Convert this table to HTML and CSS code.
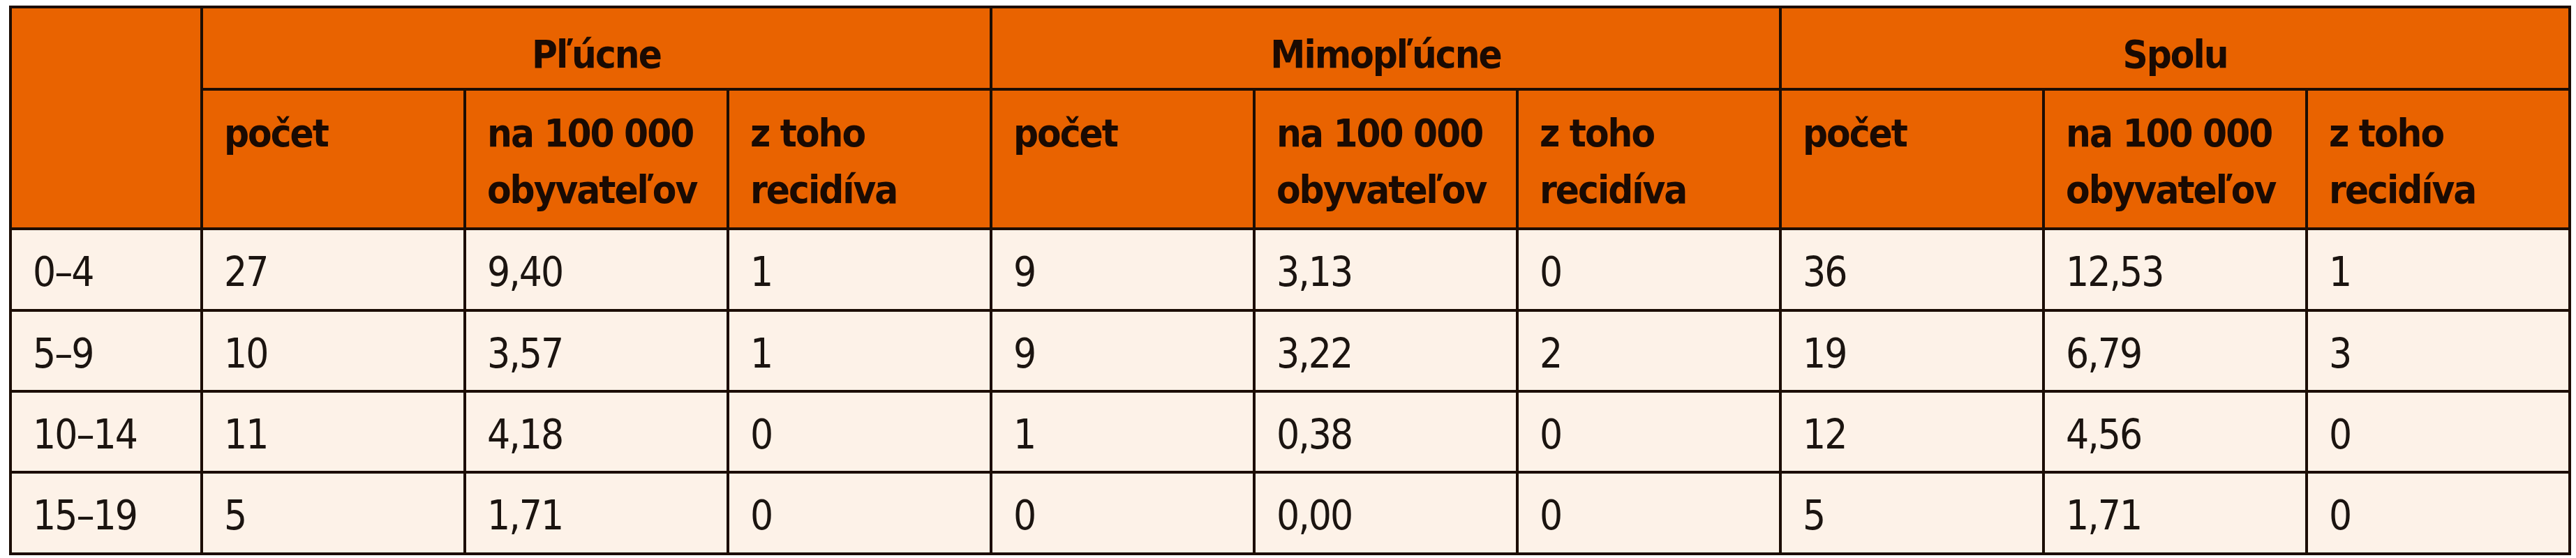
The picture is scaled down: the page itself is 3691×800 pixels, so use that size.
FILE: index.html
```html
<!DOCTYPE html>
<html lang="sk">
<head>
<meta charset="utf-8">
<title>Tabuľka</title>
<link rel="stylesheet" href="styles.css">
</head>
<body>
<table class="data">
  <colgroup>
    <col class="c-age">
    <col class="c-num"><col class="c-num"><col class="c-num">
    <col class="c-num"><col class="c-num"><col class="c-num">
    <col class="c-num"><col class="c-num"><col class="c-num">
  </colgroup>
  <thead>
    <tr class="h1">
      <th rowspan="2" class="corner"></th>
      <th colspan="3" class="group">Pľúcne</th>
      <th colspan="3" class="group">Mimopľúcne</th>
      <th colspan="3" class="group">Spolu</th>
    </tr>
    <tr class="h2">
      <th>počet</th><th>na 100 000<br>obyvateľov</th><th>z toho<br>recidíva</th>
      <th>počet</th><th>na 100 000<br>obyvateľov</th><th>z toho<br>recidíva</th>
      <th>počet</th><th>na 100 000<br>obyvateľov</th><th>z toho<br>recidíva</th>
    </tr>
  </thead>
  <tbody>
    <tr class="r1">
      <td>0–4</td><td>27</td><td>9,40</td><td>1</td><td>9</td><td>3,13</td><td>0</td><td>36</td><td>12,53</td><td>1</td>
    </tr>
    <tr class="r2">
      <td>5–9</td><td>10</td><td>3,57</td><td>1</td><td>9</td><td>3,22</td><td>2</td><td>19</td><td>6,79</td><td>3</td>
    </tr>
    <tr class="r3">
      <td>10–14</td><td>11</td><td>4,18</td><td>0</td><td>1</td><td>0,38</td><td>0</td><td>12</td><td>4,56</td><td>0</td>
    </tr>
    <tr class="r4">
      <td>15–19</td><td>5</td><td>1,71</td><td>0</td><td>0</td><td>0,00</td><td>0</td><td>5</td><td>1,71</td><td>0</td>
    </tr>
  </tbody>
</table>
</body>
</html>
```
FILE: styles.css
```css
html, body {
  margin: 0;
  padding: 0;
  background: #ffffff;
}

body {
  padding: 8px 0 0 13px;
  font-family: "DejaVu Sans Condensed", "DejaVu Sans", sans-serif;
  font-stretch: condensed;
  color: #1b1410;
}

.data {
  border-collapse: collapse;
  table-layout: fixed;
  width: 3669px;
  border: 4px solid #1c0d04;
}

.c-age { width: 274px; }
.c-num { width: 377px; }

.data th,
.data td {
  border: 4px solid #1c0d04;
  padding: 0 0 0 30px;
  text-align: left;
  line-height: 81px;
  white-space: nowrap;
  overflow: hidden;
}

.data th {
  background: #e96300;
  color: #1a0a02;
  font-weight: bold;
  font-size: 56px;
  letter-spacing: -2px;
}

.h1 { height: 118px; }
.h2 { height: 200px; }

.data th.group {
  text-align: center;
  padding: 17px 0 0 0;
  vertical-align: middle;
}

.h2 th {
  vertical-align: top;
  padding-top: 20px;
}

.data td {
  background: #fdf2e8;
  font-size: 58px;
  font-weight: normal;
  letter-spacing: -2px;
  vertical-align: middle;
  padding-top: 8px;
}

.r1 { height: 117px; }
.r2 { height: 116px; }
.r3 { height: 116px; }
.r4 { height: 117px; }
```
